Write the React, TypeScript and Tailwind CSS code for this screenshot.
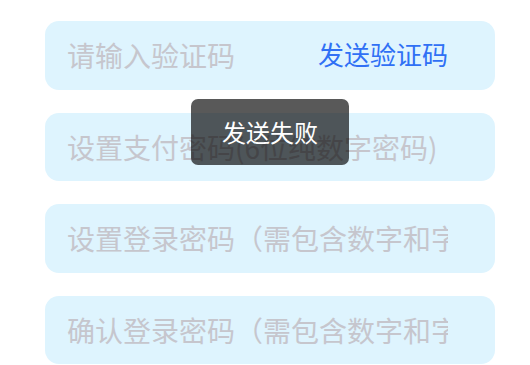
import { useState } from "react";

const fields = [
  { key: "code", placeholder: "请输入验证码", send: true },
  { key: "pay", placeholder: "设置支付密码(6位纯数字密码)" },
  { key: "login", placeholder: "设置登录密码（需包含数字和字母）" },
  { key: "confirm", placeholder: "确认登录密码（需包含数字和字母）" },
];

const App = () => {
  const [values, setValues] = useState<Record<string, string>>({});
  return (
    <div
      className="relative w-[530px] h-[365px] bg-white overflow-hidden pt-[21px] pl-[45px]"
      style={{ fontFamily: '"Noto Sans CJK SC", "Noto Sans", sans-serif' }}
    >
      <div className="relative w-[450px] flex flex-col gap-[23px]">
        {fields.map((f) => (
          <div
            key={f.key}
            className="flex items-center h-[68.5px] rounded-[14px] bg-[#def4fe] pl-[22px] pr-[47px]"
          >
            <input
              className="flex-1 min-w-0 bg-transparent outline-none text-[28px] leading-none text-[#333] placeholder:text-[#c6c6cd]"
              type={f.key === "code" ? "text" : "password"}
              placeholder={f.placeholder}
              value={values[f.key] ?? ""}
              onChange={(e) => setValues({ ...values, [f.key]: e.target.value })}
            />
            {f.send && (
              <button className="shrink-0 -mt-[2px] text-[26px] leading-none text-[#3070f5]">
                发送验证码
              </button>
            )}
          </div>
        ))}
        {/* toast */}
        <div className="absolute left-1/2 top-[78px] -translate-x-1/2 w-[158px] h-[66px] rounded-[7px] bg-black/65 flex items-center justify-center">
          <span className="text-[24px] leading-none text-white">发送失败</span>
        </div>
      </div>
    </div>
  );
};

export default App;
